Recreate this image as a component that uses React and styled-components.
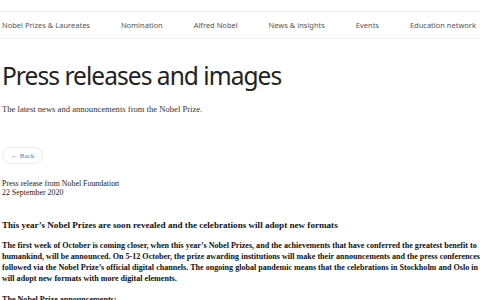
import React from 'react';
import styled, { createGlobalStyle } from 'styled-components';

const GlobalStyle = createGlobalStyle`
  html, body {
    margin: 0;
    padding: 0;
    background: #fff;
    overflow: hidden;
  }
`;

const Page = styled.div`
  width: 480px;
  padding-top: 11px;
`;

const Nav = styled.nav`
  display: flex;
  justify-content: space-between;
  align-items: center;
  height: 26px;
  padding: 0 4px 0 2px;
  border-top: 1px solid #f0f0f0;
  border-bottom: 1px solid #f0f0f0;
`;

const NavLink = styled.a`
  font-family: "Noto Sans", sans-serif;
  font-size: 7.5px;
  color: #555;
  text-decoration: none;
  white-space: nowrap;
`;

const Content = styled.main`
  padding: 0 2px;
`;

const Title = styled.h1`
  margin: 22px 0 0;
  font-family: "Noto Sans", sans-serif;
  font-weight: 400;
  font-size: 24.5px;
  line-height: 30px;
  color: #222;
  letter-spacing: -0.95px;
`;

const Lead = styled.p`
  margin: 13px 0 0;
  font-family: "Liberation Serif", serif;
  font-size: 8.6px;
  color: #333;
`;

const BackButton = styled.button`
  display: inline-flex;
  align-items: center;
  gap: 2px;
  margin-top: 33px;
  height: 17px;
  padding: 0 8px;
  border: 1px solid #ececec;
  border-radius: 9px;
  background: #fff;
  color: #3f7fc4;
  font-family: "Liberation Serif", serif;
  font-size: 7px;
`;

const Meta = styled.p`
  margin: 15px 0 0;
  font-family: "Liberation Serif", serif;
  font-size: 7.9px;
  line-height: 9px;
  color: #222;
`;

const Article = styled.article`
  width: 518px;
  font-family: "Liberation Serif", serif;
  color: #111;
`;

const Headline = styled.h2`
  margin: 23px 0 0;
  font-size: 9.1px;
  font-weight: 700;
`;

const Body = styled.p`
  margin: 10px 0 0;
  font-size: 8.1px;
  line-height: 11px;
  font-weight: 700;
`;

const navItems = [
  'Nobel Prizes & Laureates',
  'Nomination',
  'Alfred Nobel',
  'News & insights',
  'Events',
  'Education network',
];

export default function App() {
  return (
    <Page>
      <GlobalStyle />
      <Nav>
        {navItems.map((item) => (
          <NavLink key={item} href="#">{item}</NavLink>
        ))}
      </Nav>
      <Content>
        <Title>Press releases and images</Title>
        <Lead>The latest news and announcements from the Nobel Prize.</Lead>
        <BackButton>← Back</BackButton>
        <Meta>
          Press release from Nobel Foundation
          <br />
          22 September 2020
        </Meta>
        <Article>
          <Headline>This year’s Nobel Prizes are soon revealed and the celebrations will adopt new formats</Headline>
          <Body>
            The first week of October is coming closer, when this year’s Nobel Prizes, and the achievements that
            have conferred the greatest benefit to humankind, will be announced. On 5-12 October, the prize awarding
            institutions will make their announcements and the press conferences can be followed via the Nobel
            Prize’s official digital channels. The ongoing global pandemic means that the celebrations in Stockholm
            and Oslo in December will adopt new formats with more digital elements.
          </Body>
          <Body>The Nobel Prize announcements:</Body>
        </Article>
      </Content>
    </Page>
  );
}
